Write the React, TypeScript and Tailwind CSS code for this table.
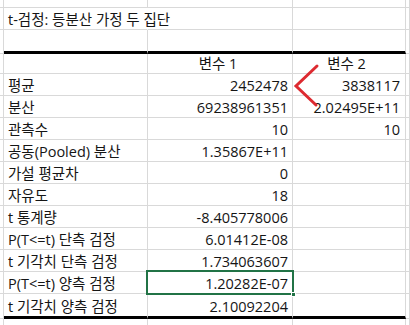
const rows: [string, string, string][] = [
  ['평균', '2452478', '3838117'],
  ['분산', '69238961351', '2.02495E+11'],
  ['관측수', '10', '10'],
  ['공동(Pooled) 분산', '1.35867E+11', ''],
  ['가설 평균차', '0', ''],
  ['자유도', '18', ''],
  ['t 통계량', '-8.405778006', ''],
  ['P(T<=t) 단측 검정', '6.01412E-08', ''],
  ['t 기각치 단측 검정', '1.734063607', ''],
  ['P(T<=t) 양측 검정', '1.20282E-07', ''],
  ['t 기각치 양측 검정', '2.10092204', ''],
]

const grid = 'border-r border-b border-[#d9d9d9]'

function Row({
  h,
  b,
  c,
  d,
  thick = false,
  header = false,
  title = false,
}: {
  h: string
  b?: string
  c?: string
  d?: string
  thick?: boolean
  header?: boolean
  title?: boolean
}) {
  const line = thick ? 'border-b-[3px] border-b-black' : ''
  return (
    <div className={`flex ${h}`}>
      <div className={`w-[4px] shrink-0 ${grid}`} />
      <div
        className={`flex w-[144px] shrink-0 items-end whitespace-nowrap pb-[2px] pl-[4px] ${grid} ${line} ${
          title ? 'overflow-visible border-r-transparent' : ''
        }`}
      >
        {b}
      </div>
      <div
        className={`flex w-[145px] shrink-0 items-end whitespace-nowrap pb-[2px] pr-[4px] ${
          header ? 'justify-center pr-0' : 'justify-end'
        } ${grid} ${line}`}
      >
        {c}
      </div>
      <div
        className={`flex w-[113px] shrink-0 items-end whitespace-nowrap pb-[2px] pr-[5px] ${
          header ? 'justify-center pr-0' : 'justify-end'
        } ${grid} ${line}`}
      >
        {d}
      </div>
      <div className={`flex-1 ${grid}`} />
    </div>
  )
}

export default function App() {
  return (
    <div className="relative h-[325px] w-[410px] overflow-hidden bg-white font-['Open_Sans','Noto_Sans_CJK_KR',sans-serif] text-[14.5px] leading-none text-[#151515]">
      <Row h="h-[8px]" />
      <Row h="h-[22px]" b="t-검정: 등분산 가정 두 집단" title />
      <Row h="h-[24px]" thick />
      <Row h="h-[20px]" c="변수 1" d="변수 2" header />
      {rows.map(([label, v1, v2], i) => (
        <Row
          key={label}
          h={i === rows.length - 1 ? 'h-[25px]' : 'h-[22px]'}
          b={label}
          c={v1}
          d={v2}
          thick={i === rows.length - 1}
        />
      ))}
      <Row h="h-[22px]" />

      {/* selected cell */}
      <div className="absolute left-[146px] top-[270px] h-[25px] w-[148px] border-2 border-[#217346]" />
      <div className="absolute left-[291px] top-[292px] h-[5px] w-[5px] border border-white bg-[#217346]" />

      {/* red annotation */}
      <svg className="pointer-events-none absolute left-0 top-0" width="410" height="325">
        <polyline
          points="317,66 296,86 316,105"
          fill="none"
          stroke="#dd2a30"
          strokeWidth="3"
          strokeLinecap="round"
          strokeLinejoin="miter"
        />
      </svg>
    </div>
  )
}
